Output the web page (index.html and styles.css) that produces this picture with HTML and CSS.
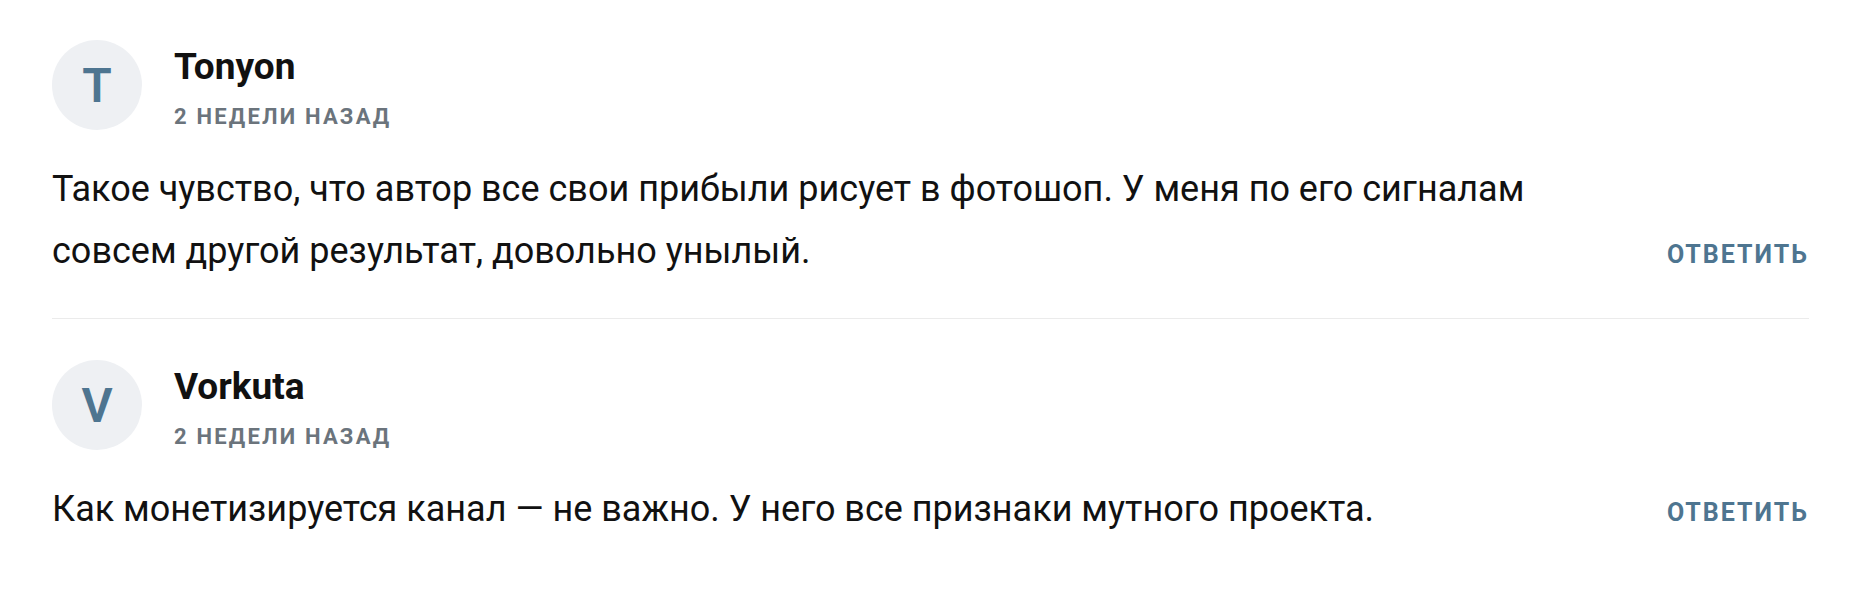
FILE: index.html
```html
<!DOCTYPE html>
<html lang="ru">
<head>
  <meta charset="UTF-8">
  <title>Комментарии</title>
  <link rel="stylesheet" href="styles.css">
</head>
<body>
  <div class="comments">
    <div class="comment">
      <div class="comment-head">
        <div class="avatar">T</div>
        <div class="meta">
          <div class="name">Tonyon</div>
          <div class="date">2 недели назад</div>
        </div>
      </div>
      <div class="comment-body">
        <p class="text">Такое чувство, что автор все свои прибыли рисует в фотошоп. У меня по его сигналам совсем другой результат, довольно унылый.</p>
        <a class="reply" href="#">Ответить</a>
      </div>
    </div>

    <div class="comment">
      <div class="comment-head">
        <div class="avatar">V</div>
        <div class="meta">
          <div class="name">Vorkuta</div>
          <div class="date">2 недели назад</div>
        </div>
      </div>
      <div class="comment-body">
        <p class="text">Как монетизируется канал — не важно. У него все признаки мутного проекта.</p>
        <a class="reply" href="#">Ответить</a>
      </div>
    </div>
  </div>
</body>
</html>
```

FILE: styles.css
```css
body {
  margin: 0;
  background: #fff;
  font-family: Roboto, 'Liberation Sans', sans-serif;
  color: #111;
}
.comments {
  padding: 0 47px 0 52px;
}
.comment {
  padding: 40px 0 36px;
  border-bottom: 1px solid #ebebeb;
}
.comment + .comment {
  padding-top: 41px;
}
.comment:last-child {
  border-bottom: none;
}
.comment-head {
  display: flex;
  align-items: flex-start;
  gap: 32px;
}
.avatar {
  width: 90px;
  height: 90px;
  border-radius: 50%;
  background: #eef0f3;
  color: #4e7590;
  font-size: 48px;
  font-weight: 600;
  display: flex;
  align-items: center;
  justify-content: center;
  flex-shrink: 0;
}
.meta {
  padding-top: 5px;
}
.name {
  font-size: 37px;
  line-height: 44px;
  font-weight: 700;
  color: #111;
}
.date {
  margin-top: 15px;
  font-size: 22px;
  line-height: 26px;
  font-weight: 700;
  letter-spacing: 2.2px;
  text-transform: uppercase;
  color: #6b747c;
}
.comment-body {
  display: flex;
  align-items: flex-end;
  justify-content: space-between;
  margin-top: 28px;
}
.text {
  margin: 0;
  max-width: 1530px;
  font-size: 36px;
  line-height: 62px;
  color: #111;
}
.reply {
  font-size: 25px;
  line-height: 54px;
  font-weight: 700;
  letter-spacing: 2px;
  text-transform: uppercase;
  text-decoration: none;
  color: #4e7590;
  white-space: nowrap;
}
```
